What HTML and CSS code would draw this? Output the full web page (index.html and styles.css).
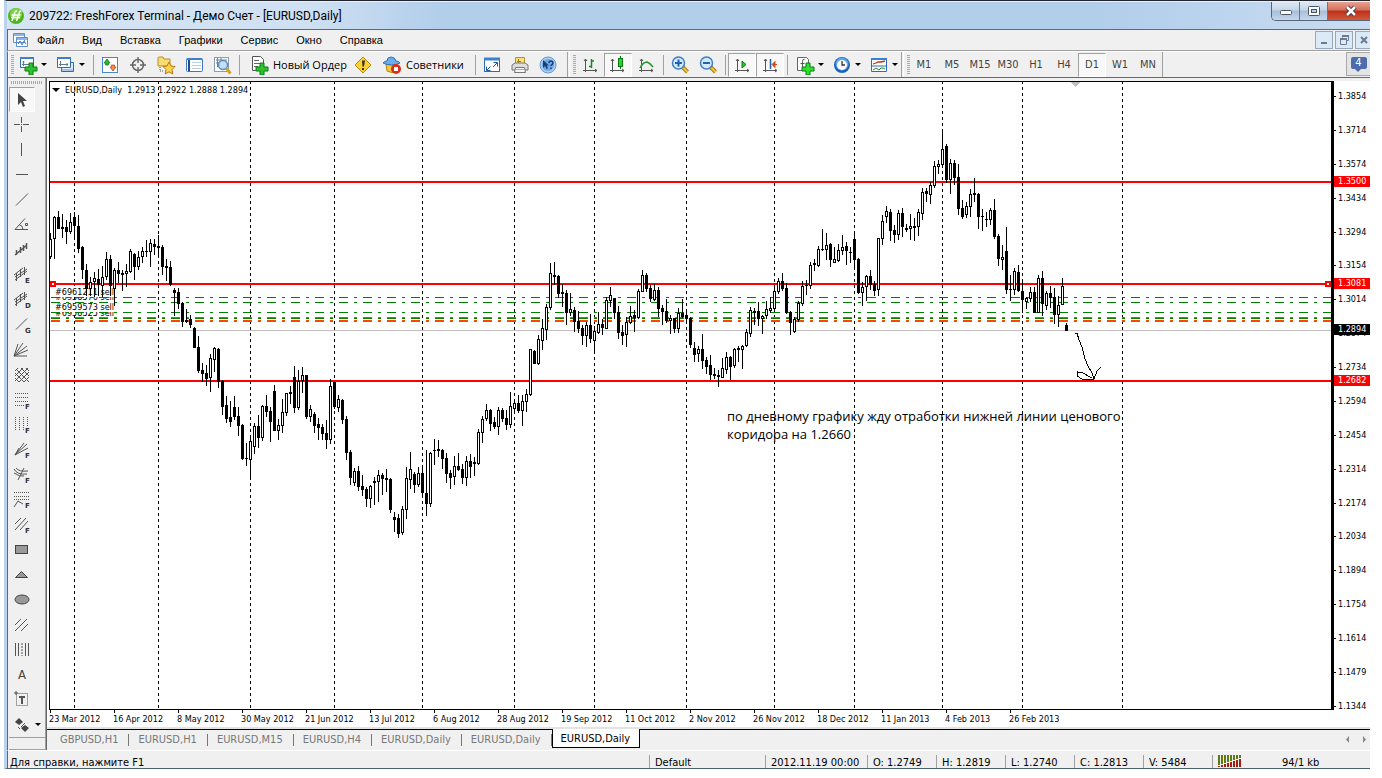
FILE: index.html
```html
<!DOCTYPE html>
<html lang="ru">
<head>
    <meta charset="UTF-8">
    <title>209722: FreshForex Terminal - Демо Счет - [EURUSD,Daily]</title>
    <link rel="stylesheet" href="styles.css">
    <script src="script.js" defer></script>
</head>
<body>
<div class="window">
    <!-- Title bar -->
    <header class="titlebar">
        <svg class="logo" width="16" height="16" viewBox="0 0 16 16"><circle cx="8" cy="8" r="8" fill="#4fb51c"/><circle cx="8" cy="6" r="6" fill="#7fd24a"/><path d="M4 13 7 4q.5-1 2-1M8.500 13l3-9q.5-1 2-1M3.500 7h9M3 9.500h9" stroke="#fff" stroke-width="1.400" fill="none"/></svg>
        <h1>209722: FreshForex Terminal - Демо Счет - [EURUSD,Daily]</h1>
        <div class="win-buttons">
            <button aria-label="Свернуть"><svg width="14" height="12" viewBox="0 0 14 12"><rect x="1.500" y="5.500" width="11" height="4" rx="1" fill="#fff" stroke="#4a5568"/></svg></button>
            <button aria-label="Развернуть"><svg width="14" height="12" viewBox="0 0 14 12"><rect x="1.500" y="1.500" width="11" height="9" rx="1" fill="#fff" stroke="#4a5568"/><rect x="4.500" y="4.500" width="5" height="3" fill="#b5cde6" stroke="#4a5568"/></svg></button>
            <button class="close" aria-label="Закрыть"><svg width="14" height="12" viewBox="0 0 14 12"><path d="M3 2l8 8M11 2l-8 8" stroke="#43303a" stroke-width="4.500"/><path d="M3 2l8 8M11 2l-8 8" stroke="#fff" stroke-width="2.500"/></svg></button>
        </div>
    </header>

    <!-- Menu -->
    <nav class="menubar">
        <svg width="16" height="14" viewBox="0 0 16 14"><path d="M.5.5h11v9H.5zM3.500 4.500h11v9h-11z" fill="#fff" stroke="#5b8fd0"/><path d="M1 2h10M4 6h10" stroke="#8db5e6" stroke-width="2"/><path d="M5 11l2-3 2 4 2-4 2 3" fill="none" stroke="#3f7bc4"/></svg>
        <button>Файл</button>
        <button>Вид</button>
        <button>Вставка</button>
        <button>Графики</button>
        <button>Сервис</button>
        <button>Окно</button>
        <button>Справка</button>
        <div class="mdi-buttons">
            <button aria-label="Свернуть окно"><svg width="12" height="12"><path d="M3 9h6" stroke="#6b7c92" stroke-width="2"/></svg></button>
            <button aria-label="Восстановить окно"><svg width="12" height="12"><path d="M4.500 3.500v-2h6v5h-2M2.500 4.500h6v6h-6z" stroke="#6b7c92" fill="none"/><path d="M2 5h7M4 2h7" stroke="#6b7c92" stroke-width="2"/></svg></button>
            <button aria-label="Закрыть окно"><svg width="12" height="12"><path d="M3 3l6 6M9 3L3 9" stroke="#6b7c92" stroke-width="2"/></svg></button>
        </div>
    </nav>

    <!-- Toolbars -->
    <div class="toolbars">
        <div class="band standard">
            <i class="grip"></i>
            <button class="drop" aria-label="Новый график"><svg width="20" height="20" viewBox="0 0 20 20"><path d="M2.500 3.500h13v9h-13z" fill="#fff" stroke="#2d6bb5"/><path d="M2 3h14" stroke="#3b7fd0" stroke-width="2"/><path d="M5.500 6v5M4 9.500h9M4.500 7h2" stroke="#5d7892"/><path d="M11 8h4v4h4v4h-4v4h-4v-4H7v-4h4z" fill="#2ec22e" stroke="#0b7a12"/></svg></button>
            <button class="drop" aria-label="Профили"><svg width="20" height="20" viewBox="0 0 20 20"><path d="M5.500 7.500h12v9h-12z" fill="#dcecfb" stroke="#2d6bb5"/><path d="M1.500 3.500h13v9h-13z" fill="#fff" stroke="#2d6bb5"/><path d="M1 3h14" stroke="#3b7fd0" stroke-width="2"/><path d="M4.500 6v5M3 9.500h9M11 8v3" stroke="#5d7892"/><path d="M6 15h11" stroke="#6fa3dd"/></svg></button>
            <i class="sep"></i>
            <button aria-label="Обзор рынка"><svg width="20" height="20" viewBox="0 0 20 20"><rect x="2.500" y="2.500" width="15" height="15" fill="#fff" stroke="#4b87c9"/><path d="M4 8l3-4 3 4H8.500v2h-3V8z" fill="#2fb52f" stroke="#13801a" stroke-width=".8"/><path d="M10 12l3 4 3-4h-1.500v-2h-3v2z" fill="#f28b50" stroke="#c24a14" stroke-width=".8"/></svg></button>
            <button aria-label="Окно данных"><svg width="20" height="20" viewBox="0 0 20 20"><circle cx="10" cy="10" r="5.500" fill="none" stroke="#666" stroke-width="1.500"/><path d="M10 2v6M10 12v6M2 10h6M12 10h6" stroke="#666" stroke-width="1.400"/></svg></button>
            <button aria-label="Навигатор"><svg width="20" height="20" viewBox="0 0 20 20"><path d="M2 4V3q0-1 1-1h4l1 2h6v7H2z" fill="#f8dc72" stroke="#b8902a"/><path d="M4 12v4h4" stroke="#555" stroke-dasharray="1 1" fill="none"/><path d="M13 7l2 4 4 .5-3 3 .8 4.500-3.800-2.200L9.200 19l.8-4.500-3-3 4-.5z" fill="#fbd64a" stroke="#b8741a"/></svg></button>
            <button aria-label="Терминал"><svg width="20" height="20" viewBox="0 0 20 20"><rect x="2.500" y="3.500" width="16" height="13" rx="1" fill="#fff" stroke="#3a78bf"/><path d="M3 4h15" stroke="#3b7fd0" stroke-width="2"/><path d="M5 5v11" stroke="#1c4d8c" stroke-width="2"/><path d="M8 7.500h9M8 10.500h9M8 13.500h9" stroke="#b9cfe6"/></svg></button>
            <button aria-label="Тестер стратегий"><svg width="20" height="20" viewBox="0 0 20 20"><rect x="2.500" y="2.500" width="14" height="14" fill="#fff" stroke="#8c9cb0"/><path d="M4 5h11M4 8h4M5.500 3v9M9 3v4" stroke="#6d7f95"/><circle cx="11" cy="10" r="4.500" fill="#c3e0fa" stroke="#5c8cbf" stroke-width="1.500"/><path d="M14.500 13.500l4 5" stroke="#d6a41e" stroke-width="3"/></svg></button>
            <i class="sep"></i>
            <button class="wide order"><svg width="20" height="20" viewBox="0 0 20 20"><path d="M3.500 1.500h8l3 3v11h-11z" fill="#fff" stroke="#555"/><path d="M5 5.500h5M5 8.500h7M5 11.500h4" stroke="#666"/><path d="M11 8h4v4h4v4h-4v4h-4v-4H7v-4h4z" fill="#2ec22e" stroke="#0b7a12"/></svg>Новый Ордер</button>
            <button aria-label="MetaEditor"><svg width="20" height="20" viewBox="0 0 20 20"><path d="M10 2l8 8-8 8-8-8z" fill="#fbd02f" stroke="#b98a10"/><path d="M9 5.500h3l-1 6H9.500z" fill="#333"/><path d="M9 13h2v2H9z" fill="#333"/></svg></button>
            <button class="wide"><svg width="20" height="20" viewBox="0 0 20 20"><path d="M4 9h11l-1 7q-4 3-9 0z" fill="#f6c63a" stroke="#b8860b"/><path d="M1 8q8 4 17 0-1-2-4-2-1-4-5-4T5 6Q2 6 1 8z" fill="#6cacea" stroke="#2f6fb5"/><circle cx="14" cy="14" r="5" fill="#d8301a"/><path d="M12 12h4v4h-4z" fill="#fff"/></svg>Советники</button>
            <i class="sep"></i>
            <button aria-label="Полный экран"><svg width="20" height="20" viewBox="0 0 20 20"><rect x="2.500" y="3.500" width="15" height="13" fill="#fff" stroke="#2d6bb5"/><path d="M2 4h16" stroke="#3b7fd0" stroke-width="3"/><path d="M11.500 7.500h4v4M15 8l-4 4M8.500 15.500h-4v-4M5 15l3.500-3.500" stroke="#1c5aa5" fill="none"/></svg></button>
            <button aria-label="Печать"><svg width="20" height="20" viewBox="0 0 20 20"><path d="M5.500 2.500h9v7h-9z" fill="#fbe27a" stroke="#b8902a"/><path d="M8.500 4v5M7 6.500h4" stroke="#a37b16"/><path d="M2 10l3-2h10l3 2v5H2z" fill="#ddd" stroke="#777"/><path d="M5.500 12.500h9l1 5h-11z" fill="#f5f5f5" stroke="#777"/><path d="M6 14.500h8" stroke="#aaa"/></svg></button>
            <button aria-label="Справка"><svg width="20" height="20" viewBox="0 0 20 20"><circle cx="10" cy="10" r="8" fill="#a9cdf3" stroke="#6c98cb"/><circle cx="10" cy="10" r="6" fill="#74a8e2"/><path d="M5 5v8l2-2 1.500 3 1.500-1-1.500-2.500H11z" fill="#173f78"/><path d="M11 8q0-2 2-2t2 2q0 1-2 2.500V11M13 12.500V14" stroke="#173f78" stroke-width="1.500" fill="none"/></svg></button>
        </div>
        <div class="band">
            <i class="grip"></i>
            <button aria-label="Бары"><svg width="20" height="20" viewBox="0 0 20 20"><path d="M5.500 4v13M3 15.500h14M4 6l1.500-2L7 6M15 14l2 1.500-2 1.500" stroke="#555" fill="none"/><path d="M11.500 4v9M9 11.500h2.500M11.500 6H14" stroke="#16891d" stroke-width="1.500"/></svg></button>
            <button class="pressed" aria-label="Японские свечи"><svg width="20" height="20" viewBox="0 0 20 20"><path d="M4.500 4v13M2 15.500h14M3 6l1.500-2L6 6M14 14l2 1.500-2 1.500" stroke="#555" fill="none"/><path d="M12.500 1v13" stroke="#0b6a12"/><rect x="10.500" y="3.500" width="4" height="8" fill="#2ed02e" stroke="#0b7a12"/></svg></button>
            <button aria-label="Линия"><svg width="20" height="20" viewBox="0 0 20 20"><path d="M5.500 4v13M3 15.500h14M4 6l1.500-2L7 6M15 14l2 1.500-2 1.500" stroke="#555" fill="none"/><path d="M4 13q3-6 7-6 3 1 6 5" stroke="#249a2c" stroke-width="1.500" fill="none"/></svg></button>
            <i class="sep"></i>
            <button aria-label="Увеличить"><svg width="20" height="20" viewBox="0 0 20 20"><path d="M12.500 12l5 5" stroke="#a87b10" stroke-width="4"/><path d="M12.500 12l5 5" stroke="#f0c73a" stroke-width="2"/><circle cx="8.500" cy="8" r="6" fill="#d3e9fc" stroke="#3f7fc2" stroke-width="1.500"/><path d="M5 8h7M8.500 4.500v7" stroke="#1f62ad" stroke-width="2"/></svg></button>
            <button aria-label="Уменьшить"><svg width="20" height="20" viewBox="0 0 20 20"><path d="M12.500 12l5 5" stroke="#a87b10" stroke-width="4"/><path d="M12.500 12l5 5" stroke="#f0c73a" stroke-width="2"/><circle cx="8.500" cy="8" r="6" fill="#d3e9fc" stroke="#3f7fc2" stroke-width="1.500"/><path d="M5 8h7" stroke="#1f62ad" stroke-width="2"/></svg></button>
            <i class="sep"></i>
            <button class="pressed" aria-label="Автопрокрутка"><svg width="20" height="20" viewBox="0 0 20 20"><path d="M5.500 4v13M3 15.500h14M4 6l1.500-2L7 6M15 14l2 1.500-2 1.500" stroke="#555" fill="none"/><path d="M10 6l4 3.500-4 3.500z" fill="#2ec22e" stroke="#0b7a12"/></svg></button>
            <button class="pressed" aria-label="Сдвиг графика"><svg width="20" height="20" viewBox="0 0 20 20"><path d="M5.500 4v13M3 15.500h14M4 6l1.500-2L7 6M15 14l2 1.500-2 1.500" stroke="#555" fill="none"/><path d="M10.500 4v10" stroke="#1f5aa5" stroke-width="1.500"/><path d="M17 9.500h-4M12 9.500l3-3v6z" fill="#d4471c" stroke="#d4471c"/></svg></button>
            <i class="sep"></i>
            <button class="drop" aria-label="Индикаторы"><svg width="20" height="20" viewBox="0 0 20 20"><path d="M2.500 2.500h9l2 2v11h-11z" fill="#fff" stroke="#666"/><path d="M9.500 4.500q-2-1-2 2v7M5.500 8.500h4" stroke="#555" fill="none"/><path d="M11 8h4v4h4v4h-4v4h-4v-4H7v-4h4z" fill="#2ee22e" stroke="#0b7a12"/></svg></button>
            <button class="drop" aria-label="Периоды"><svg width="20" height="20" viewBox="0 0 20 20"><circle cx="10" cy="10" r="8" fill="#1b63b8"/><circle cx="10" cy="9" r="6.500" fill="#5aa4ec"/><circle cx="10" cy="10" r="5" fill="#fff"/><path d="M10 6v4h3" stroke="#333" stroke-width="1.300" fill="none"/></svg></button>
            <button class="drop" aria-label="Шаблоны"><svg width="20" height="20" viewBox="0 0 20 20"><path d="M2.500 3.500h15v13h-15z" fill="#fff" stroke="#2d6bb5"/><path d="M2 4h16" stroke="#3b7fd0" stroke-width="2"/><path d="M3 11h14" stroke="#2d6bb5"/><path d="M4 9l3-1 2-1h3l4-1" stroke="#b53a1c" stroke-width="1.300" fill="none"/><path d="M4 15l3-2 3 2 2-2h2l2 1" stroke="#1c8a26" fill="none"/></svg></button>
        </div>
        <div class="band periods">
            <i class="grip"></i>
            <button>M1</button>
            <button>M5</button>
            <button>M15</button>
            <button>M30</button>
            <button>H1</button>
            <button>H4</button>
            <button class="pressed">D1</button>
            <button>W1</button>
            <button>MN</button>
        </div>
        <button class="messages"><span>4</span></button>
    </div>

    <div class="workspace">
        <!-- Line studies -->
        <aside class="tools">
            <i class="grip"></i>
            <button class="pressed" aria-label="Курсор"><svg width="20" height="20" viewBox="0 0 20 20"><path d="M6 3v12l3-3 2 5 2-1-2-5h4z" fill="#444"/></svg></button>
            <button aria-label="Перекрестие"><svg width="20" height="20" viewBox="0 0 20 20"><path d="M9.500 2v6M9.500 11v6M2 9.500h6M11 9.500h6"/><path d="M9 9.500h1"/></svg></button>
            <button aria-label="Вертикальная линия"><svg width="20" height="20" viewBox="0 0 20 20"><path d="M9.500 3v13"/></svg></button>
            <button aria-label="Горизонтальная линия"><svg width="20" height="20" viewBox="0 0 20 20"><path d="M4 9.500h12"/></svg></button>
            <button aria-label="Трендовая линия"><svg width="20" height="20" viewBox="0 0 20 20"><path d="M4 15.500l12-12"/></svg></button>
            <button aria-label="Линия по углу"><svg width="20" height="20" viewBox="0 0 20 20"><path d="M13 3.500L3 14.500h13M7 9.500q4 1 4 5M13.500 8.500h2v2h-2z"/></svg></button>
            <button aria-label="Каналы"><svg width="20" height="20" viewBox="0 0 20 20"><path d="M3 15l12-10M4.500 10v5M8.500 7v6M11.500 5v6M14.500 3v6" stroke-width="1.500"/></svg></button>
            <button aria-label="Равноудаленный канал"><svg width="20" height="20" viewBox="0 0 20 20"><path d="M2 10l9-7M3 15l12-9M4.500 8v8M8.500 4v8M12.500 2v8M3 12l12-8"/><text x="13" y="18">E</text></svg></button>
            <button aria-label="Канал отклонения"><svg width="20" height="20" viewBox="0 0 20 20"><path d="M2 10l9-7M3 15l12-9M4.500 8v8M8.500 4v8M12.500 2v8M3 12l12-8"/><text x="13" y="18">D</text></svg></button>
            <button aria-label="Линия Ганна"><svg width="20" height="20" viewBox="0 0 20 20"><path d="M4 14.500l11-11"/><text x="13" y="18">G</text></svg></button>
            <button aria-label="Веер Ганна"><svg width="20" height="20" viewBox="0 0 20 20"><path d="M2 16L6 4M2 16L11 3M2 16l13-10M2 16l14-6M2 16h13"/></svg></button>
            <button aria-label="Сетка Ганна"><svg width="20" height="20" viewBox="0 0 20 20"><path d="M3 6l3-3M3 11l8-8M3 16L16 3M7 17L17 7M12 17l5-5M14 3l3 3M9 3l8 8M4 4l13 13M3 8l9 9M3 13l4 4"/></svg></button>
            <button aria-label="Линии Фибоначчи"><svg width="20" height="20" viewBox="0 0 20 20"><path d="M3 3.500h13M3 7.500h13M3 11.500h13M3 15.500h9" stroke-dasharray="1 1"/><text x="13" y="19">F</text></svg></button>
            <button aria-label="Временные зоны Фибоначчи"><svg width="20" height="20" viewBox="0 0 20 20"><path d="M3.500 2v14M7.500 2v14M11.500 2v14M15.500 2v9" stroke-dasharray="1 1"/><text x="13" y="18">F</text></svg></button>
            <button aria-label="Веер Фибоначчи"><svg width="20" height="20" viewBox="0 0 20 20"><path d="M3 15L12 3M3 15L15 4M3 15l13-7M3 15l4-7"/><text x="13" y="18">F</text></svg></button>
            <button aria-label="Дуги Фибоначчи"><svg width="20" height="20" viewBox="0 0 20 20"><path d="M2 4q3 6 13 5M4 3q3 4 12 3M6 15l6-12M2 8q6 4 10 3"/><text x="13" y="18">F</text></svg></button>
            <button aria-label="Расширение Фибоначчи"><svg width="20" height="20" viewBox="0 0 20 20"><path d="M2 2.500h15M2 6.500h15M2 9.500h15" stroke-dasharray="1 1"/><path d="M2 17l4-6 5 3"/><text x="13" y="18">F</text></svg></button>
            <button aria-label="Канал Фибоначчи"><svg width="20" height="20" viewBox="0 0 20 20"><path d="M3 9l6-6M3 15L14 3M8 15l8-9"/><text x="13" y="18">F</text></svg></button>
            <button aria-label="Прямоугольник"><svg width="20" height="20" viewBox="0 0 20 20"><rect class="shape" x="3.500" y="5.500" width="12" height="8"/></svg></button>
            <button aria-label="Треугольник"><svg width="20" height="20" viewBox="0 0 20 20"><path class="shape" d="M9.500 6.500l6 6h-12z"/></svg></button>
            <button aria-label="Эллипс"><svg width="20" height="20" viewBox="0 0 20 20"><ellipse class="shape" cx="10" cy="9.500" rx="7" ry="4.500"/></svg></button>
            <button aria-label="Вилы Эндрюса"><svg width="20" height="20" viewBox="0 0 20 20"><path d="M3 10l6-6M3 16L15 4M9 16l7-7"/></svg></button>
            <button aria-label="Циклические линии"><svg width="20" height="20" viewBox="0 0 20 20"><path d="M3.500 3v13M6.500 3v13M13.500 3v13M16.500 3v13"/><path d="M10 3v13" stroke-dasharray="2 1"/></svg></button>
            <button class="letter">A</button>
            <button aria-label="Текстовая метка"><svg width="20" height="20" viewBox="0 0 20 20"><rect x="4.500" y="3.500" width="11" height="12" stroke-dasharray="1 1"/><path d="M3 2h2v2H3z" fill="#444"/><path d="M7 7h6M10 7v7" stroke-width="2"/></svg></button>
            <button class="drop" aria-label="Стрелки"><svg width="20" height="20" viewBox="0 0 20 20"><path d="M7 3l4 4-4 3-4-3zM13 17l-4-4 4-3 4 3z" fill="#444" stroke="none"/><path d="M6 12l2 2M9 12l4-4"/></svg></button>
        </aside>

        <main class="chart-area">
            <section class="chart">
                <div class="plot">
                    <svg class="plot-svg" width="100%" height="627">
                        <g id="separators"></g>
                        <g class="orders">
                            <text x="5" y="218">#6958576 sell</text>
                            <text x="5" y="234">#6958525 sell</text>
                            <rect x="5" y="204" width="60" height="11"/>
                            <rect x="5" y="219" width="60" height="11"/>
                            <text x="5" y="213">#6961211 sell</text>
                            <text x="5" y="228">#6959573 sell</text>
                        </g>
                        <rect class="level" y="99" width="100%" height="2"/>
                        <rect class="level" y="201" width="100%" height="2"/>
                        <rect class="level" y="298" width="100%" height="2"/>
                        <rect class="bid" y="248" width="100%" height="1"/>
                        <g class="deals">
                            <line x1="1" y1="215.500" x2="100%" y2="215.500"/>
                            <line x1="1" y1="220.500" x2="100%" y2="220.500"/>
                            <line x1="1" y1="230.500" x2="100%" y2="230.500"/>
                            <line class="stop" x1="1" y1="235.500" x2="100%" y2="235.500"/>
                            <line x1="1" y1="236.500" x2="100%" y2="236.500"/>
                            <line class="stop thick" x1="1" y1="239" x2="100%" y2="239"/>
                        </g>
                        <path id="bars"/>
                        <path id="hollow"/>
                        <path class="shift-mark" d="M1020 0h10l-5 5z"/>
                        <rect class="anchor" x="1" y="200" width="4" height="4"/>
                        <svg x="100%" overflow="visible"><rect class="anchor" x="-5" y="200" width="4" height="4"/></svg>
                        <path class="arrow" d="M1025 251h2l2 7 3 7 3 12 3 7 4 7 2 6M1027 289v5l5 3h12l3-8 4-4M1027 290l4 0 11 6"/>
                    </svg>
                    <p class="quote"><span class="marker"></span>EURUSD,Daily&nbsp; 1.2913 1.2922 1.2888 1.2894</p>
                    <p class="note">по дневному графику жду отработки нижней линии ценового<br>коридора на 1.2660</p>
                </div>
                <div class="prices">
                    <span>1.3854</span><span>1.3714</span><span>1.3574</span><span>1.3434</span><span>1.3294</span><span>1.3154</span><span>1.3014</span><span>1.2874</span><span>1.2734</span><span>1.2594</span><span>1.2454</span><span>1.2314</span><span>1.2174</span><span>1.2034</span><span>1.1894</span><span>1.1754</span><span>1.1614</span><span>1.1479</span><span>1.1344</span>
                    <b class="tag top">1.3500</b>
                    <b class="tag middle">1.3081</b>
                    <b class="tag current">1.2894</b>
                    <b class="tag bottom">1.2682</b>
                </div>
                <div class="dates">
                    <span>23 Mar 2012</span><span>16 Apr 2012</span><span>8 May 2012</span><span>30 May 2012</span><span>21 Jun 2012</span><span>13 Jul 2012</span><span>6 Aug 2012</span><span>28 Aug 2012</span><span>19 Sep 2012</span><span>11 Oct 2012</span><span>2 Nov 2012</span><span>26 Nov 2012</span><span>18 Dec 2012</span><span>11 Jan 2013</span><span>4 Feb 2013</span><span>26 Feb 2013</span>
                </div>
            </section>
            <nav class="tabs">
                <button>GBPUSD,H1</button>
                <button>EURUSD,H1</button>
                <button>EURUSD,M15</button>
                <button>EURUSD,H4</button>
                <button>EURUSD,Daily</button>
                <button>EURUSD,Daily</button>
                <button class="active">EURUSD,Daily</button>
                <svg class="scroll" width="24" height="9"><path d="M5 1v7L2 4.500zM19 1v7l3-3.500z" fill="#888"/></svg>
            </nav>
        </main>
    </div>

    <!-- Status bar -->
    <footer class="status">
        <span class="hint">Для справки, нажмите F1</span>
        <span class="profile">Default</span>
        <span class="time">2012.11.19 00:00</span>
        <span>O: 1.2749</span>
        <span>H: 1.2819</span>
        <span>L: 1.2740</span>
        <span>C: 1.2813</span>
        <span>V: 5484</span>
        <span class="link">
            <svg width="24" height="12" shape-rendering="crispEdges"><path d="M1 0v10M4 0v9M7 0v8M10 0v7M13 0v6M16 0v5M19 0v4M22 0v3" stroke="#5f7a14" stroke-width="2"/><path d="M1 11v1M4 10v2M7 9v3M10 8v4M13 7v5M16 6v6M19 5v7M22 4v8" stroke="#a32010" stroke-width="2"/></svg>
            94/1 kb
        </span>
    </footer>
</div>
</body>
</html>
```
FILE: styles.css
```css
* {
    box-sizing: border-box;
}
body {
    margin: 0;
    background: #fff;
    color: #000;
    font-family: "DejaVu Sans Condensed", "DejaVu Sans", sans-serif;
    font-size: 11px;
}
button {
    margin: 0;
    padding: 0;
    border: 0;
    background: none;
    color: inherit;
    font: inherit;
}
svg {
    display: block;
    flex: none;
}
h1, p {
    margin: 0;
    font-weight: normal;
}
.window {
    margin: 0 12px 0 4px;
    border-left: 3px solid #b9d3ee;
    border-top: 1px solid #23232b;
    border-bottom: 1px solid #4c5f70;
    background: #f0f0f0;
    overflow: hidden;
}

/* Title bar */
.titlebar {
    display: flex;
    align-items: center;
    height: 29px;
    border-top: 1px solid #e6f1fb;
    border-bottom: 1px solid #5b6b7c;
    background: linear-gradient(90deg, #d6e5f4 0, #cfe0f2 22%, #b1ceeb 32%, #b1ceeb 80%, #c9dcf1 100%);
}
.logo {
    margin: 0 5px 0 1px;
}
.titlebar h1 {
    flex: 1;
    font-family: Roboto, "Open Sans", sans-serif;
    font-size: 12px;
    white-space: nowrap;
}
.win-buttons {
    display: flex;
    align-self: flex-start;
    height: 19px;
    border: 1px solid #566578;
    border-width: 0 0 1px 1px;
    border-radius: 0 0 0 5px;
    overflow: hidden;
}
.win-buttons button {
    display: flex;
    align-items: center;
    justify-content: center;
    width: 28px;
    border-right: 1px solid #66768a;
    background: linear-gradient(#dfe9f4, #c4d5e8 45%, #a9bfd8 50%, #c3d8ee);
}
.win-buttons .close {
    width: 42px;
    padding-left: 4px;
    border-right: 0;
    background: linear-gradient(#e5a293, #d5705a 45%, #bb2f18 50%, #d3583a);
}

/* Menu */
.menubar {
    display: flex;
    align-items: center;
    height: 21px;
    padding-left: 5px;
    border-left: 1px solid #5b6b7c;
    border-bottom: 1px solid #a0a0a0;
    font-family: "Liberation Sans", Arial, sans-serif;
}
.menubar > button {
    margin-left: 18px;
}
.menubar > svg + button {
    margin-left: 8px;
}
.mdi-buttons {
    display: flex;
    gap: 2px;
    margin-left: auto;
    margin-right: -3px;
}
.mdi-buttons button {
    display: flex;
    align-items: center;
    justify-content: center;
    width: 18px;
    height: 18px;
    border: 1px solid #98a9bd;
    background: #dce9f7;
}

/* Toolbars */
.toolbars {
    display: flex;
    height: 27px;
    border-left: 1px solid #5b6b7c;
    border-top: 1px solid #fff;
    border-bottom: 1px solid #696969;
}
.band {
    display: flex;
    align-items: center;
    margin-right: 1px;
    padding-left: 3px;
    border-left: 1px solid #fff;
    border-right: 1px solid #a0a0a0;
}
.grip {
    width: 3px;
    height: 20px;
    background: repeating-linear-gradient(#aaa 0 1px, #f0f0f0 1px 2px);
}
.sep {
    width: 1px;
    height: 20px;
    margin: 0 2px 0 3px;
    background: #a0a0a0;
}
.band button {
    display: flex;
    align-items: center;
    justify-content: center;
    width: 28px;
    height: 24px;
}
.band .drop {
    justify-content: flex-start;
    width: 37px;
    padding-left: 5px;
}
.band .drop::after,
.tools .drop::after {
    content: "";
    margin-left: 3px;
    border: 3px solid transparent;
    border-top-color: #000;
    border-bottom: 0;
}
.band .wide {
    justify-content: flex-start;
    gap: 4px;
    width: 95px;
    padding-left: 5px;
    font-family: "Open Sans", "Noto Sans", sans-serif;
    white-space: nowrap;
}
.band .order {
    width: 107px;
    padding-left: 7px;
}
.standard {
    padding: 0 5px 0 2px;
}
.standard .drop {
    width: 38px;
    padding-left: 4px;
}
.band .pressed,
.tools .pressed {
    border: 1px solid #fff;
    border-top-color: #a0a0a0;
    border-left-color: #a0a0a0;
    background: #f8f8f8;
}
.periods {
    color: #444;
}
.messages {
    display: flex;
    justify-content: center;
    width: 24px;
    height: 24px;
    margin-left: auto;
    padding-top: 4px;
    border: 1px solid #a8a8a8;
    border-right: 0;
    background: #e4e4e4;
    color: #fff;
}
.messages span {
    width: 16px;
    height: 12px;
    border-radius: 2px;
    background: #4c6cae;
    line-height: 12px;
}
.messages span::after {
    content: "";
    display: block;
    width: 0;
    margin-left: 4px;
    border: 3px solid transparent;
    border-top-color: #4c6cae;
    border-bottom: 0;
}

/* Line studies */
.workspace {
    display: flex;
}
.tools {
    display: flex;
    flex-direction: column;
    align-items: flex-start;
    width: 39px;
    padding: 3px 0 0 1px;
    border-left: 1px solid #5b6b7c;
    border-right: 1px solid #a0a0a0;
}
.tools .grip {
    width: 32px;
    height: 3px;
    margin: 0 0 3px 2px;
    background: repeating-linear-gradient(90deg, #aaa 0 1px, #f0f0f0 1px 2px);
}
.tools::after {
    content: "";
    width: 100%;
    height: 11px;
    border: 1px solid #a0a0a0;
    border-width: 1px 0;
}
.tools button {
    display: flex;
    align-items: center;
    justify-content: center;
    width: 26px;
    height: 25px;
}
.tools .drop {
    justify-content: flex-start;
    width: 36px;
    padding-left: 3px;
}
.tools .letter {
    color: #444;
    font-size: 13px;
}
.tools path,
.tools rect {
    fill: none;
    stroke: #555;
}
.tools .pressed path {
    fill: #444;
    stroke: none;
}
.tools .drop path:first-child {
    fill: #444;
    stroke: none;
}
.tools .shape {
    fill: #999;
    stroke: #444;
}
.tools text {
    fill: #333;
    font: bold 7px "DejaVu Sans", sans-serif;
}

/* Chart */
.chart-area {
    flex: 1;
    min-width: 0;
    padding-top: 3px;
    border-left: 1px solid #696969;
}
.chart {
    display: grid;
    grid-template-columns: 1fr 36px;
    padding-left: 2px;
    border-bottom: 2px solid #e3e3e3;
    background: #fff;
    font-size: 9px;
}
.plot {
    position: relative;
    border: 1px solid #000;
    border-right-width: 3px;
    overflow: hidden;
}
.plot-svg {
    shape-rendering: crispEdges;
}
#separators line {
    stroke: #000;
    stroke-dasharray: 3 3;
    stroke-dashoffset: 1;
}
.orders rect {
    fill: #fff;
}
.level {
    fill: #f00;
}
.bid {
    fill: #c0c0c0;
}
.deals line {
    stroke: #008000;
    stroke-dasharray: 9 6 3 6;
}
.deals .stop {
    stroke: #ff4500;
}
.deals .thick {
    stroke-width: 2px;
}
#hollow {
    fill: #fff;
}
.shift-mark {
    fill: #c0c0c0;
}
.anchor {
    fill: #fff;
    stroke: #f00;
    stroke-width: 2px;
}
.arrow {
    fill: none;
    stroke: #000;
}
.quote {
    position: absolute;
    top: 2px;
    left: 2px;
    display: flex;
    align-items: center;
    line-height: 12px;
}
.marker {
    margin-right: 5px;
    border: 4px solid transparent;
    border-top-color: #000;
    border-bottom: 0;
}
.note {
    position: absolute;
    top: 325px;
    left: 677px;
    font-family: "Open Sans", "Noto Sans", sans-serif;
    font-size: 13px;
    line-height: 18px;
    white-space: nowrap;
}
.prices {
    position: relative;
    display: flex;
    flex-direction: column;
    justify-content: space-between;
    margin-bottom: -2px;
    padding-top: 9px;
    line-height: 12px;
}
.prices span::before {
    content: "";
    display: inline-block;
    width: 2px;
    height: 1px;
    margin-right: 2px;
    background: #000;
    vertical-align: middle;
}
.tag {
    position: absolute;
    left: 0;
    width: 100%;
    padding-left: 4px;
    background: #f00;
    color: #fff;
    font-weight: normal;
    line-height: 11px;
}
.tag.top { top: 95px; }
.tag.middle { top: 197px; }
.tag.current { top: 243px; background: #000; }
.tag.bottom { top: 294px; }
.dates {
    display: grid;
    grid-template-columns: repeat(16, 64px);
    height: 17px;
    line-height: 14px;
    white-space: nowrap;
}
.dates span::before {
    content: "";
    display: block;
    width: 1px;
    height: 3px;
    margin: 0 0 -1px 1px;
    background: #000;
}

/* Chart tabs */
.tabs {
    display: flex;
    align-items: flex-start;
    height: 20px;
    padding-left: 4px;
    border-top: 1px solid #000;
    color: #777;
    font-size: 11px;
}
.tabs button {
    position: relative;
    height: 18px;
    padding: 0 11px 0 9px;
}
.tabs button::after {
    content: "";
    position: absolute;
    top: 4px;
    right: 0;
    width: 1px;
    height: 12px;
    background: #777;
}
.tabs .active {
    height: 19px;
    margin-top: -1px;
    padding: 0 9px 0 8px;
    border: 1px solid #000;
    border-top: 0;
    background: #fff;
    color: #000;
}
.tabs .active::after {
    display: none;
}
.scroll {
    margin: 5px 2px 0 auto;
}

/* Status bar */
.status {
    display: flex;
    height: 18px;
    padding-top: 4px;
    border-left: 1px solid #5b6b7c;
    border-top: 1px solid #fff;
    line-height: 15px;
    white-space: nowrap;
}
.status span {
    width: 69px;
    padding-left: 5px;
    border-left: 1px solid #a0a0a0;
}
.status .hint {
    flex: 1;
    padding-left: 2px;
    border-left: 0;
}
.status .profile {
    width: 116px;
}
.status .time {
    width: 102px;
}
.status .link {
    display: flex;
    align-items: flex-start;
    gap: 40px;
    width: 158px;
}
```
FILE: script.js
```js
// Daily bars, oldest first: high, body top, body bottom, low, filled (1) or hollow (0).
// Each block counts from its own base row, in thirds of a pixel.
const blocks = [
    [98, [
        [159,178,230,236,0],[107,111,176,237,0],[93,111,146,148,1],[103,141,146,173,1],[121,141,155,192,1],[98,126,155,161,0],
        [96,111,139,178,1],[104,138,206,218,1],[198,201,271,297,1],[253,270,327,348,1],[291,306,327,347,0],[276,295,305,350,0],
        [267,297,314,347,1],[257,291,317,350,0],[216,237,292,299,0],[225,237,317,347,1],[264,270,326,378,0],[246,270,283,309,1],
        [270,279,285,333,1],[252,273,283,322,0],[207,213,275,279,0],[219,222,261,300,1],[213,231,261,270,0],[202,213,231,248,0],
        [180,213,216,231,1],[177,189,215,261,0],[178,191,200,224,1],[165,198,203,233,1],[196,201,261,284,1],[238,258,264,304,1],
        [243,261,315,318,1],[323,330,339,407,1],[323,335,371,387,1],[366,369,426,440,1],[387,420,426,429,1],[405,417,435,444,1],
        [441,444,503,503,1],[468,501,572,578,1],[549,570,581,605,1],[555,579,597,617,1],[522,534,593,635,0],[501,504,539,576,0],
        [504,507,605,623,1],[600,603,681,704,1],[648,675,716,728,1],[663,711,725,740,1],[648,681,711,720,1],[681,709,738,767,1],
        [732,735,836,839,1],[789,834,836,857,1],[765,783,839,899,0],[729,738,800,822,0],[705,738,773,804,1],[675,678,773,783,0],
        [645,678,695,711,1],[681,692,725,785,1],[615,633,752,752,1],[717,735,752,780,0]
    ]],
    [248, [
        [207,246,288,309,0],[189,189,248,257,0],[168,187,193,222,0],[108,141,234,249,1],[120,154,234,240,0],[111,135,154,188,0],
        [135,135,261,266,1],[225,237,261,276,0],[246,252,288,308,1],[264,282,293,330,1],[281,290,312,330,1],[270,309,330,356,1],
        [147,168,330,341,0],[155,155,231,238,1],[195,207,233,246,0],[207,210,269,282,1],[258,267,368,390,1],[360,366,443,465,1],
        [414,423,458,467,0],[408,423,470,482,1],[435,468,480,498,1],[471,477,507,531,1],[465,468,507,533,0],[441,453,459,525,1],
        [420,435,455,516,0],[429,435,447,495,1],[417,444,450,485,1],[444,447,540,548,1],[546,561,570,605,1],[552,564,611,623,1],
        [528,537,608,614,0],[411,444,540,567,0],[366,417,449,476,0],[426,432,464,489,1],[411,429,464,470,0],[408,429,488,503,1],
        [360,488,522,558,1],[366,369,522,531,0],[327,360,362,405,1],[330,357,362,380,1],[357,360,386,417,1],[369,384,431,458,1],
        [420,429,443,476,1],[378,408,440,465,0],[369,408,420,423,1],[402,417,443,462,1],[378,393,443,468,0],[372,393,410,444,1],
        [381,396,401,437,1],[297,306,402,405,0],[258,267,308,339,0],[222,240,267,273,0],[237,240,282,302,1],[261,276,290,297,1],
        [231,240,290,315,0],[234,240,267,276,1],[240,264,285,300,1],[186,228,284,294,0],[207,219,236,249,0],[195,219,243,249,1],
        [195,213,243,288,0],[177,192,215,246,0],[57,57,195,197,0],[60,63,101,101,1],[15,27,102,105,0]
    ]],
    [158, [
        [237,265,302,330,0],[192,201,269,300,0],[69,99,203,209,0],[66,105,110,135,1],[105,108,161,174,1],[132,156,161,200,1],
        [150,159,219,255,1],[159,207,218,228,0],[201,210,245,275,1],[213,243,266,278,1],[255,264,287,315,1],[246,255,287,320,0],
        [222,255,297,308,1],[258,273,303,336,0],[216,252,278,282,0],[237,252,263,284,1],[171,180,266,267,0],[141,165,182,200,0],
        [174,174,218,237,1],[198,216,279,296,1],[255,276,287,314,1],[231,246,284,320,0],[198,228,248,252,0],[210,225,234,276,1],
        [147,153,233,237,0],[90,105,155,156,0],[99,105,147,155,1],[135,144,177,186,1],[132,150,179,182,0],[141,150,206,230,1],
        [195,204,215,254,1],[177,213,243,249,1],[225,234,242,282,0],[234,234,266,279,1],[204,219,266,278,0],[177,219,230,234,1],
        [207,225,236,249,1],[231,234,314,323,1],[306,324,344,366,1],[318,327,342,366,0],[282,327,362,386,1],[351,360,380,402,1],
        [345,375,404,419,1],[384,402,407,416,1],[390,405,410,441,1],[354,384,413,414,0],[336,351,389,401,0],[348,351,380,419,1],
        [324,327,378,384,0],[318,324,329,366,1],[315,318,329,387,0],[267,276,317,320,0],[201,210,281,291,0],[204,213,218,254,1],
        [186,213,237,257,1],[225,228,236,282,0],[183,207,227,236,0],[171,204,212,218,0],[134,153,206,216,0],[114,123,155,162,0],
        [99,123,147,153,1],[129,144,218,222,1],[213,216,249,285,1],[231,237,275,278,0],[183,189,240,245,0],[123,138,191,198,0],
        [120,135,137,164,1],[66,75,137,146,0],[57,69,75,92,1],[18,27,77,80,0]
    ]],
    [28, [
        [357,417,419,423,1],[369,405,419,450,0],[399,402,450,471,1],[411,447,458,458,0],[402,420,452,455,0],[375,411,422,435,0],
        [396,408,422,464,1],[411,426,428,458,1],[366,387,450,470,1],[444,447,548,552,1],[516,531,548,588,0],[495,498,530,573,0],
        [480,498,525,540,1],[513,522,542,557,1],[384,384,540,557,0],[315,333,386,405,0],[288,303,320,338,0],[297,306,362,392,1],
        [345,360,374,398,1],[300,309,374,389,0],[294,309,350,380,1],[342,353,359,365,1],[312,348,356,389,0],[324,348,353,393,1],
        [297,306,350,377,0],[234,246,311,329,0],[234,243,251,275,1],[216,225,254,282,0],[153,168,227,233,0],[150,162,170,192,0],
        [57,117,164,170,0],[102,108,209,218,1],[147,159,209,252,0],[150,159,203,225,1],[162,201,297,315,1],[270,294,320,326,1],
        [276,288,314,323,0],[237,252,290,320,0],[204,249,254,275,1],[249,252,321,356,1],[297,318,321,362,1],[306,327,329,350,1],
        [294,300,329,345,0],[267,300,380,387,1],[372,378,446,467,1],[405,441,449,479,0],[351,423,539,551,1],[495,537,540,573,1],
        [474,483,540,555,0],[465,486,543,546,1],[507,543,569,608,1],[561,564,575,597,0],[531,546,567,575,0],[531,546,608,609,1],
        [495,504,608,608,0],[483,504,581,618,1],[543,549,588,600,0],[528,549,563,593,1],[534,561,614,641,1],[558,585,614,651,0],
        [504,528,584,585,0],[639,645,663,663,1]
    ]]
];

const months = [24, 108, 200, 284, 372, 464, 544, 636, 724, 804, 892, 972, 1072];

function box(x, y1, y2, w) {
    return `M${x} ${y1}h${w}V${y2}h${-w}z`;
}

let black = "";
let white = "";
let x = 0;
blocks.forEach(([base, bars]) => {
    bars.forEach(bar => {
        const [high, top, bottom, low] = bar.slice(0, 4).map(v => base + Math.round(v / 3));
        const end = Math.max(bottom, top + 1);
        black += box(x, high, low, 1) + box(x - 1, top, end, 3);
        if (!bar[4] && end - top > 2) {
            white += box(x, top + 1, end - 1, 1);
        }
        x += 4;
    });
});
document.getElementById("bars").setAttribute("d", black);
document.getElementById("hollow").setAttribute("d", white);

document.getElementById("separators").innerHTML = months
    .map(m => `<line x1="${m + 0.5}" y1="0" x2="${m + 0.5}" y2="100%"/>`)
    .join("");
```
